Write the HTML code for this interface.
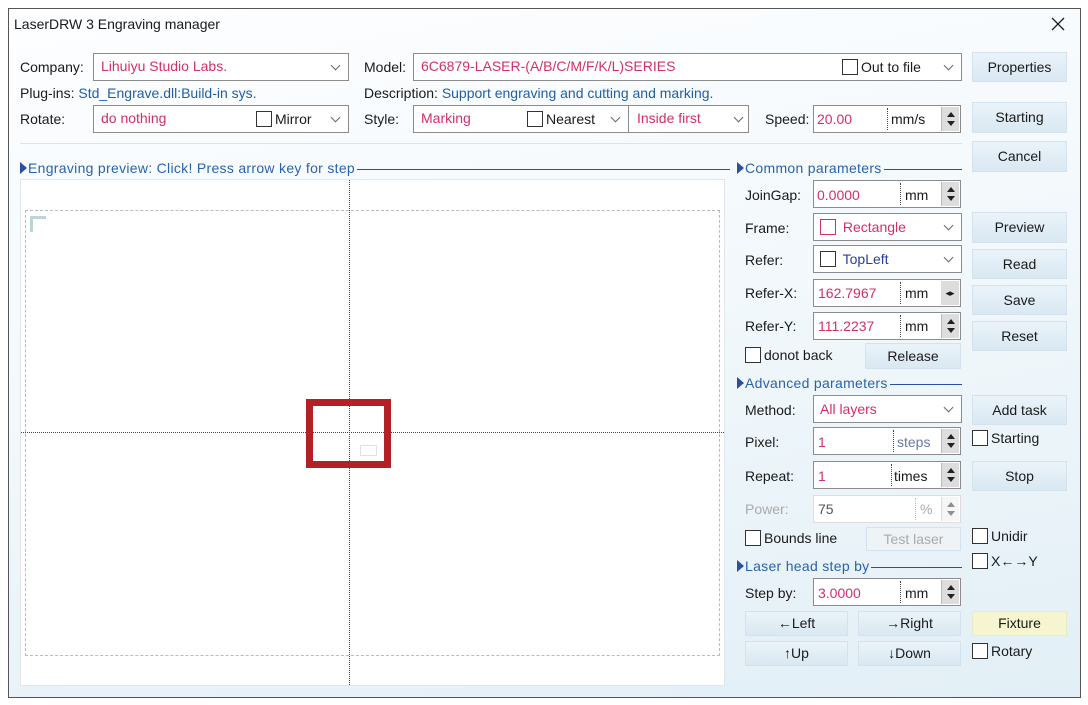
<!DOCTYPE html>
<html><head><meta charset="utf-8"><style>
*{box-sizing:border-box;margin:0;padding:0}
body{width:1088px;height:705px;background:#fff;font-family:"Liberation Sans",sans-serif;font-size:14px;color:#1a1a1a;position:relative;overflow:hidden}
.win{position:absolute;left:8px;top:8px;width:1073px;height:690px;border:1.5px solid #555;background:linear-gradient(170deg,#fdfeff 0%,#f4f9fc 40%,#e2eff6 100%)}
.a{position:absolute;white-space:nowrap;line-height:16px}
.box{position:absolute;background:#fff;border:1px solid #8c8c8c}
.pk{color:#d0306a}
.bl{color:#1f5fa6}
.hd{position:absolute;display:flex;align-items:center;color:#2a63ad;white-space:nowrap;line-height:16px;letter-spacing:.3px}
.hd i{flex:1;height:1px;background:#2a4fa0;margin-left:2px;margin-top:2px}
.btn{position:absolute;background:linear-gradient(#eaf3f9,#d9e8f2);border:1px solid #d3e2ec;text-align:center;line-height:28px}
.cb{display:inline-block;width:16px;height:16px;border:1px solid #333;background:#fff;vertical-align:-3px;margin-right:3px}
.chev{position:absolute;width:7px;height:7px;border-right:1px solid #666;border-bottom:1px solid #666;transform:rotate(45deg)}
.spin{position:absolute;width:18px;background:#ddd;border-left:1px solid #bbb}
.spin:before,.spin:after{content:"";position:absolute;left:5px;border-left:4px solid transparent;border-right:4px solid transparent}
.spin:before{top:5px;border-bottom:5px solid #222}
.spin:after{bottom:5px;border-top:5px solid #222}
.dot{position:absolute;border-left:1px dotted #444}
.tri{display:inline-block;width:0;height:0;border-top:6px solid transparent;border-bottom:6px solid transparent;border-left:7px solid #2a4fa0;margin-right:1px}
</style></head><body>
<div class="win"></div>
<div class="a" style="left:14px;top:16px">LaserDRW 3 Engraving manager</div>
<svg style="position:absolute;left:1051px;top:17px" width="14" height="14"><path d="M1 1L13 13M13 1L1 13" stroke="#222" stroke-width="1.3"/></svg>

<!-- Row 1 -->
<div class="a" style="left:20px;top:59px">Company:</div>
<div class="box" style="left:93px;top:53px;width:256px;height:28px"></div>
<div class="a pk" style="left:101px;top:58px">Lihuiyu Studio Labs.</div>
<div class="chev" style="left:332px;top:62px"></div>
<div class="a" style="left:364px;top:59px">Model:</div>
<div class="box" style="left:413px;top:53px;width:549px;height:28px"></div>
<div class="a pk" style="left:421px;top:58px">6C6879-LASER-(A/B/C/M/F/K/L)SERIES</div>
<div class="a" style="left:842px;top:59px"><span class="cb"></span>Out to file</div>
<div class="chev" style="left:945px;top:62px"></div>
<div class="btn" style="left:972px;top:52px;width:95px;height:30px">Properties</div>

<!-- Row 2 -->
<div class="a" style="left:20px;top:85px">Plug-ins: <span class="bl">Std_Engrave.dll:Build-in sys.</span></div>
<div class="a" style="left:364px;top:85px">Description: <span class="bl">Support engraving and cutting and marking.</span></div>

<!-- Row 3 -->
<div class="a" style="left:20px;top:111px">Rotate:</div>
<div class="box" style="left:93px;top:105px;width:256px;height:28px"></div>
<div class="a pk" style="left:101px;top:110px">do nothing</div>
<div class="a" style="left:256px;top:111px"><span class="cb"></span>Mirror</div>
<div class="chev" style="left:332px;top:114px"></div>
<div class="a" style="left:364px;top:111px">Style:</div>
<div class="box" style="left:413px;top:105px;width:216px;height:28px"></div>
<div class="a pk" style="left:421px;top:110px">Marking</div>
<div class="a" style="left:527px;top:111px"><span class="cb"></span>Nearest</div>
<div class="chev" style="left:612px;top:114px"></div>
<div class="box" style="left:628px;top:105px;width:121px;height:28px"></div>
<div class="a pk" style="left:637px;top:110px">Inside first</div>
<div class="chev" style="left:735px;top:114px"></div>
<div class="a" style="left:765px;top:111px">Speed:</div>
<div class="box" style="left:813px;top:105px;width:148px;height:28px"></div>
<div class="a pk" style="left:817px;top:111px">20.00</div>
<div class="dot" style="left:887px;top:108px;height:22px"></div>
<div class="a" style="left:891px;top:111px">mm/s</div>
<div class="spin" style="left:941px;top:107px;height:24px"></div>
<div class="btn" style="left:972px;top:102px;width:95px;height:31px">Starting</div>

<div style="position:absolute;left:20px;top:143px;width:942px;height:1px;background:#dde3e8"></div>
<div class="btn" style="left:972px;top:141px;width:95px;height:31px">Cancel</div>

<!-- Preview -->
<div class="hd" style="left:20px;top:160px;width:710px"><span class="tri"></span>Engraving preview: Click! Press arrow key for step<i></i></div>
<div style="position:absolute;left:20px;top:179px;width:705px;height:507px;background:#fff;border:1px solid #e0e6ea"></div>
<div style="position:absolute;left:25px;top:210px;width:695px;height:446px;border:1px dashed #bbb"></div>
<div style="position:absolute;left:30px;top:216px;width:16px;height:3px;background:#bfd3d8"></div>
<div style="position:absolute;left:30px;top:216px;width:3px;height:16px;background:#bfd3d8"></div>
<div class="dot" style="left:349px;top:180px;height:505px"></div>
<div style="position:absolute;left:21px;top:432px;width:703px;border-top:1px dotted #444"></div>
<div style="position:absolute;left:306px;top:399px;width:85px;height:69px;border:7px solid #b52027"></div>
<div style="position:absolute;left:360px;top:445px;width:17px;height:11px;border:1px solid #e5dde8"></div>

<!-- Common parameters -->
<div class="hd" style="left:737px;top:160px;width:225px"><span class="tri"></span>Common parameters<i></i></div>

<div class="a" style="left:745px;top:187px">JoinGap:</div>
<div class="box" style="left:813px;top:180px;width:148px;height:28px"></div>
<div class="a pk" style="left:817px;top:187px">0.0000</div>
<div class="dot" style="left:900px;top:183px;height:22px"></div>
<div class="a" style="left:905px;top:187px">mm</div>
<div class="spin" style="left:941px;top:182px;height:24px"></div>

<div class="a" style="left:745px;top:220px">Frame:</div>
<div class="box" style="left:813px;top:213px;width:149px;height:28px"></div>
<div class="a pk" style="left:820px;top:219px"><span class="cb" style="border-color:#d0306a"></span> Rectangle</div>
<div class="chev" style="left:945px;top:222px"></div>
<div class="btn" style="left:972px;top:212px;width:95px;height:31px">Preview</div>

<div class="a" style="left:745px;top:252px">Refer:</div>
<div class="box" style="left:813px;top:245px;width:149px;height:28px"></div>
<div class="a" style="left:820px;top:251px;color:#2a3f9a"><span class="cb"></span> TopLeft</div>
<div class="chev" style="left:945px;top:254px"></div>
<div class="btn" style="left:972px;top:249px;width:95px;height:30px">Read</div>

<div class="a" style="left:745px;top:285px">Refer-X:</div>
<div class="box" style="left:813px;top:279px;width:148px;height:28px"></div>
<div class="a pk" style="left:818px;top:285px">162.7967</div>
<div class="dot" style="left:900px;top:282px;height:22px"></div>
<div class="a" style="left:905px;top:285px">mm</div>
<div style="position:absolute;left:941px;top:281px;width:18px;height:24px;background:#ddd;text-align:center;font-size:9px;line-height:24px">◂▸</div>
<div class="btn" style="left:972px;top:285px;width:95px;height:30px">Save</div>

<div class="a" style="left:745px;top:318px">Refer-Y:</div>
<div class="box" style="left:813px;top:312px;width:148px;height:28px"></div>
<div class="a pk" style="left:818px;top:318px">111.2237</div>
<div class="dot" style="left:900px;top:315px;height:22px"></div>
<div class="a" style="left:905px;top:318px">mm</div>
<div class="spin" style="left:941px;top:314px;height:24px"></div>
<div class="btn" style="left:972px;top:321px;width:95px;height:30px">Reset</div>

<div class="a" style="left:745px;top:347px"><span class="cb"></span>donot back</div>
<div class="btn" style="left:865px;top:343px;width:96px;height:26px;line-height:24px">Release</div>

<div class="hd" style="left:737px;top:375px;width:225px"><span class="tri"></span>Advanced parameters<i></i></div>

<div class="a" style="left:745px;top:402px">Method:</div>
<div class="box" style="left:813px;top:395px;width:149px;height:28px"></div>
<div class="a pk" style="left:820px;top:401px">All layers</div>
<div class="chev" style="left:945px;top:404px"></div>
<div class="btn" style="left:972px;top:395px;width:95px;height:30px">Add task</div>

<div class="a" style="left:745px;top:434px">Pixel:</div>
<div class="box" style="left:813px;top:427px;width:148px;height:28px"></div>
<div class="a pk" style="left:818px;top:434px">1</div>
<div class="dot" style="left:893px;top:430px;height:22px"></div>
<div class="a" style="left:897px;top:434px;color:#6a7aa8">steps</div>
<div class="spin" style="left:941px;top:429px;height:24px"></div>
<div class="a" style="left:972px;top:430px"><span class="cb"></span>Starting</div>

<div class="a" style="left:745px;top:468px">Repeat:</div>
<div class="box" style="left:813px;top:461px;width:148px;height:28px"></div>
<div class="a pk" style="left:818px;top:468px">1</div>
<div class="dot" style="left:891px;top:464px;height:22px"></div>
<div class="a" style="left:894px;top:468px">times</div>
<div class="spin" style="left:941px;top:463px;height:24px"></div>
<div class="btn" style="left:972px;top:461px;width:95px;height:30px">Stop</div>

<div class="a" style="left:745px;top:501px;color:#aaa">Power:</div>
<div class="box" style="left:813px;top:495px;width:148px;height:28px;border-color:#ddd"></div>
<div class="a" style="left:818px;top:501px;color:#555">75</div>
<div class="dot" style="left:915px;top:498px;height:22px;border-color:#bbb"></div>
<div class="a" style="left:920px;top:501px;color:#aaa">%</div>
<div class="spin" style="left:941px;top:497px;height:24px;background:#eee;opacity:.5"></div>

<div class="a" style="left:745px;top:530px"><span class="cb"></span>Bounds line</div>
<div class="btn" style="left:866px;top:527px;width:95px;height:24px;line-height:22px;color:#aaa;background:#eef3f6">Test laser</div>
<div class="a" style="left:972px;top:528px"><span class="cb"></span>Unidir</div>

<div class="hd" style="left:737px;top:558px;width:225px"><span class="tri"></span>Laser head step by<i></i></div>
<div class="a" style="left:972px;top:553px"><span class="cb"></span>X←→Y</div>

<div class="a" style="left:745px;top:585px">Step by:</div>
<div class="box" style="left:813px;top:578px;width:148px;height:28px"></div>
<div class="a pk" style="left:818px;top:585px">3.0000</div>
<div class="dot" style="left:900px;top:581px;height:22px"></div>
<div class="a" style="left:905px;top:585px">mm</div>
<div class="spin" style="left:941px;top:580px;height:24px"></div>

<div class="btn" style="left:745px;top:611px;width:103px;height:25px;line-height:23px">←Left</div>
<div class="btn" style="left:858px;top:611px;width:103px;height:25px;line-height:23px">→Right</div>
<div class="btn" style="left:972px;top:611px;width:95px;height:25px;line-height:23px;background:#f5f5cf;border-color:#e8ebc8">Fixture</div>
<div class="btn" style="left:745px;top:641px;width:103px;height:25px;line-height:23px">↑Up</div>
<div class="btn" style="left:858px;top:641px;width:103px;height:25px;line-height:23px">↓Down</div>
<div class="a" style="left:972px;top:643px"><span class="cb"></span>Rotary</div>
</body></html>
